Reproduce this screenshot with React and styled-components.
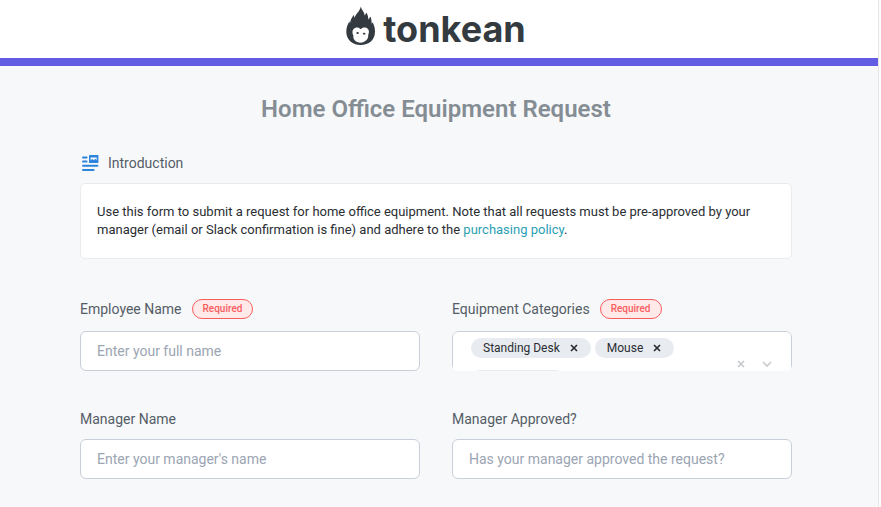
import React from "react";
import styled, { createGlobalStyle } from "styled-components";

const GlobalStyle = createGlobalStyle`
  *, *::before, *::after { box-sizing: border-box; }
  html, body, #root { height: 100%; }
  body {
    margin: 0;
    overflow: hidden;
    background: #fbfbfb;
    color: #2a2e33;
    font-family: Roboto, "Liberation Sans", sans-serif;
  }
`;

const Page = styled.div`
  min-height: 100%;
  margin-right: 2px;
  border-right: 1px solid #e6e6e8;
  background: #f7f8fa;
`;

const Header = styled.header`
  height: 66px;
  padding: 0 6px 0 0;
  display: flex;
  justify-content: center;
  background: #fff;
  border-bottom: 8px solid #615ce2;
`;

const Brand = styled.div`
  display: flex;
  align-items: flex-start;
  gap: 7px;
  padding-top: 6px;
  color: #343b40;
`;

const Wordmark = styled.span`
  font: 700 36px/46px Inter, sans-serif;
`;

const Main = styled.main`
  padding: 26px 86px 28px 80px;
`;

const Title = styled.h1`
  margin: 0 0 27px;
  font-size: 24px;
  line-height: 34px;
  font-weight: 600;
  text-align: center;
  color: #858d94;
`;

const SectionTitle = styled.h2`
  margin: 0 0 10px;
  display: flex;
  align-items: center;
  gap: 8px;
  font-size: 14px;
  line-height: 20px;
  font-weight: 400;
  color: #545d66;
`;

const Intro = styled.p`
  margin: 0 0 40px;
  padding: 19px 16px;
  border: 1px solid #e9ebef;
  border-radius: 5px;
  background: #fff;
  font-size: 13px;
  line-height: 18px;
`;

const Link = styled.a`
  color: #2b9fb5;
  text-decoration: none;
`;

const Form = styled.form`
  display: grid;
  grid-template-columns: 1fr 1fr;
  column-gap: 32px;
  row-gap: 38px;
`;

const Field = styled.div`
  min-width: 0;
`;

const LabelRow = styled.div`
  display: flex;
  align-items: center;
  gap: 10px;
  margin-bottom: ${(p) => (p.$tall ? "12px" : "10px")};
  height: 20px;
`;

const Label = styled.label`
  font-size: 14px;
  line-height: 20px;
  color: #545d66;
`;

const Badge = styled.span`
  height: 20px;
  padding: 0 10px;
  border: 1px solid #f95e5e;
  border-radius: 10px;
  background: #ffe9e9;
  color: #f95e5e;
  font-size: 10px;
  line-height: 18px;
  font-weight: 500;
`;

const TextInput = styled.input`
  display: block;
  width: 100%;
  height: 40px;
  padding: 0 16px;
  border: 1px solid #c9cfd8;
  border-radius: 6px;
  background: #fff;
  font: 400 14px/20px Roboto, sans-serif;
  color: #2a2e33;
  outline: none;
  &::placeholder { color: #9ba5b3; opacity: 1; }
`;

const SelectClip = styled.div`
  height: 40px;
  overflow: hidden;
  border-radius: 6px;
`;

const SelectBox = styled.div`
  display: flex;
  align-items: center;
  height: 66px;
  border: 1px solid #c9cfd8;
  border-radius: 6px;
  background: #fff;
`;

const Chips = styled.div`
  flex: 1;
  align-self: stretch;
  display: flex;
  flex-wrap: wrap;
  align-content: flex-start;
  column-gap: 4px;
  row-gap: 12px;
  padding: 6px 0 0 18px;
`;

const Chip = styled.span`
  display: flex;
  align-items: center;
  height: 20px;
  min-width: ${(p) => (p.$empty ? "94px" : "0")};
  padding: 0 13px 0 12px;
  gap: 10px;
  border-radius: 10px;
  background: #e8ebf0;
  font-size: 12px;
  line-height: 20px;
`;

const IconButton = styled.button`
  display: flex;
  padding: 0;
  border: 0;
  background: none;
  color: ${(p) => (p.$muted ? "#c8cacd" : "#2a2e33")};
`;

const Indicators = styled.div`
  display: flex;
  align-items: center;
  gap: 17px;
  padding-right: 19px;
`;

const FlameLogo = () => (
  <svg width="30" height="40" viewBox="0 0 30 40" aria-hidden="true">
    <path
      fill="currentColor"
      d="M14.8 0.5C15.4 3.6 18.2 5.4 18.8 9.6L20.4 6.4C21.8 9 22.4 11 22.4 13.8L24.4 10.6C25.6 13.4 25.6 15.4 25.6 17.6L26.8 16.6C28.4 20 29 22.4 29 25.5C29 34 23 39 14.5 39C6 39 0.3 33.5 0.3 25.5C0.3 21.4 1.6 18.4 3.4 15.2L4 17.4C4.4 14 5.6 11.6 7.8 9L8.6 12C9.6 7.6 14 5.4 14.8 0.5Z"
    />
    <path
      fill="#fff"
      d="M14.7 23.2C16.2 21.5 18.2 21 20.2 21.8C23.1 23 23.6 26 22.2 29C22.7 33.2 19 36.5 14.5 36.7C10 36.4 6.7 33.5 7.4 29.4C5.8 26.5 6.3 23 9.1 21.9C11.2 21 13.2 21.6 14.7 23.2Z"
    />
    <ellipse cx="11.6" cy="27" rx="1.3" ry="0.9" fill="currentColor" />
    <ellipse cx="18.2" cy="27.7" rx="1.3" ry="0.9" fill="currentColor" />
  </svg>
);

const IntroIcon = () => (
  <svg width="20" height="20" viewBox="0 0 20 20" aria-hidden="true">
    <path
      d="M3 4.4H6.6M3 8.6H6.6M3 12.8H17.4M3 17H13.6"
      stroke="#2d84dc"
      strokeWidth="2"
      strokeLinecap="round"
    />
    <rect x="9" y="2" width="9.4" height="8" rx="0.6" fill="#2d84dc" />
    <path d="M10.6 7.2V4.4H16.7V7.2L15.2 5.8L13.8 7.2L12.2 6Z" fill="#f7f8fa" />
  </svg>
);

const Cross = () => (
  <svg width="8" height="8" viewBox="0 0 8 8" aria-hidden="true">
    <path d="M1 1L7 7M7 1L1 7" stroke="currentColor" strokeWidth="1.7" />
  </svg>
);

const Chevron = () => (
  <svg width="10" height="8" viewBox="0 0 10 8" aria-hidden="true">
    <path d="M1 2L5 6L9 2" fill="none" stroke="currentColor" strokeWidth="1.6" />
  </svg>
);

const categories = ["Standing Desk", "Mouse"];

function TextField({ id, label, placeholder, required }) {
  return (
    <Field>
      <LabelRow $tall={required}>
        <Label htmlFor={id}>{label}</Label>
        {required && <Badge>Required</Badge>}
      </LabelRow>
      <TextInput id={id} type="text" placeholder={placeholder} required={required} />
    </Field>
  );
}

function CategoryField() {
  return (
    <Field>
      <LabelRow $tall>
        <Label as="span" id="categories-label">Equipment Categories</Label>
        <Badge>Required</Badge>
      </LabelRow>
      <SelectClip role="group" aria-labelledby="categories-label">
        <SelectBox>
          <Chips>
            {categories.map((name) => (
              <Chip key={name}>
                {name}
                <IconButton type="button" aria-label={`Remove ${name}`}>
                  <Cross />
                </IconButton>
              </Chip>
            ))}
            <Chip $empty aria-hidden="true" />
          </Chips>
          <Indicators>
            <IconButton type="button" $muted aria-label="Clear all">
              <Cross />
            </IconButton>
            <IconButton type="button" $muted aria-label="Show categories" aria-haspopup="listbox">
              <Chevron />
            </IconButton>
          </Indicators>
        </SelectBox>
      </SelectClip>
    </Field>
  );
}

export default function App() {
  return (
    <>
      <GlobalStyle />
      <Page>
        <Header>
          <Brand>
            <FlameLogo />
            <Wordmark>tonkean</Wordmark>
          </Brand>
        </Header>
        <Main>
          <Title>Home Office Equipment Request</Title>
          <SectionTitle>
            <IntroIcon />
            Introduction
          </SectionTitle>
          <Intro>
            Use this form to submit a request for home office equipment. Note that all requests must be
            pre-approved by your manager (email or Slack confirmation is fine) and adhere to the{" "}
            <Link href="#purchasing-policy">purchasing policy</Link>.
          </Intro>
          <Form>
            <TextField id="employee" label="Employee Name" placeholder="Enter your full name" required />
            <CategoryField />
            <TextField id="manager" label="Manager Name" placeholder="Enter your manager's name" />
            <TextField id="approved" label="Manager Approved?" placeholder="Has your manager approved the request?" />
          </Form>
        </Main>
      </Page>
    </>
  );
}
